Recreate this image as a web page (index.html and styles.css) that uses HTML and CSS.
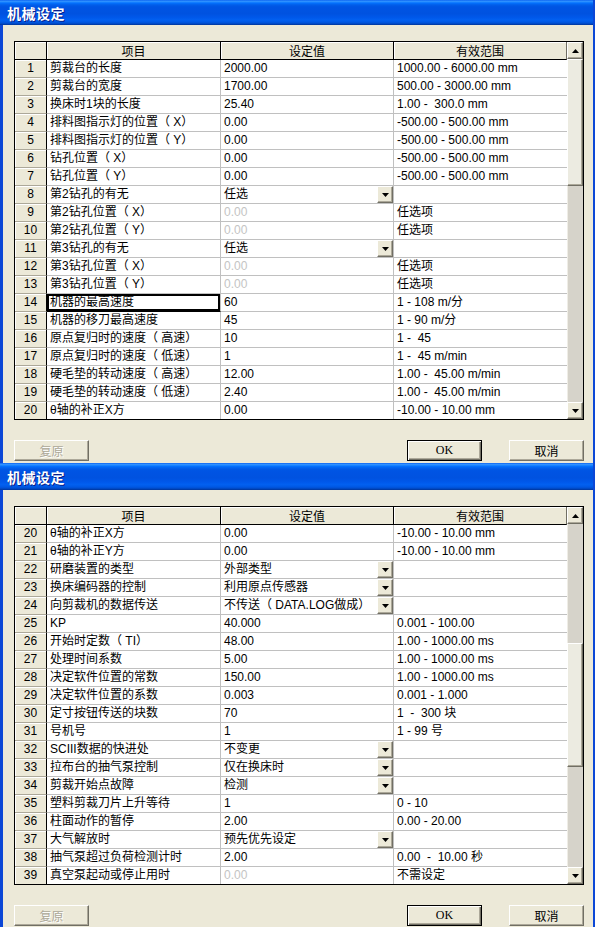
FILE: index.html
```html
<!DOCTYPE html>
<html lang="zh-CN">
<head>
<meta charset="utf-8">
<title>机械设定</title>
<link rel="stylesheet" href="styles.css">
</head>
<body>
<div class="page">

<section class="dialog first">
  <div class="titlebar"><span class="title">机械设定</span></div>
  <div class="body">
    <div class="grid">
      <div class="sheet">
        <div class="row head"><div class="num"></div><div>项目</div><div>设定值</div><div>有效范围</div></div>
        <div class="row"><div class="num">1</div><div>剪裁台的长度</div><div>2000.00</div><div>1000.00 - 6000.00 mm</div></div>
        <div class="row"><div class="num">2</div><div>剪裁台的宽度</div><div>1700.00</div><div>500.00 - 3000.00 mm</div></div>
        <div class="row"><div class="num">3</div><div>换床时1块的长度</div><div>25.40</div><div>1.00 -&nbsp; 300.0 mm</div></div>
        <div class="row"><div class="num">4</div><div>排料图指示灯的位置（ X）</div><div>0.00</div><div>-500.00 - 500.00 mm</div></div>
        <div class="row"><div class="num">5</div><div>排料图指示灯的位置（ Y）</div><div>0.00</div><div>-500.00 - 500.00 mm</div></div>
        <div class="row"><div class="num">6</div><div>钻孔位置（ X）</div><div>0.00</div><div>-500.00 - 500.00 mm</div></div>
        <div class="row"><div class="num">7</div><div>钻孔位置（ Y）</div><div>0.00</div><div>-500.00 - 500.00 mm</div></div>
        <div class="row"><div class="num">8</div><div>第2钻孔的有无</div><div class="combo"><span>任选</span><span class="drop"><svg width="7" height="4" viewBox="0 0 7 4"><path d="M0 0h7L3.5 4z"/></svg></span></div><div></div></div>
        <div class="row"><div class="num">9</div><div>第2钻孔位置（ X）</div><div class="off">0.00</div><div>任选项</div></div>
        <div class="row"><div class="num">10</div><div>第2钻孔位置（ Y）</div><div class="off">0.00</div><div>任选项</div></div>
        <div class="row"><div class="num">11</div><div>第3钻孔的有无</div><div class="combo"><span>任选</span><span class="drop"><svg width="7" height="4" viewBox="0 0 7 4"><path d="M0 0h7L3.5 4z"/></svg></span></div><div></div></div>
        <div class="row"><div class="num">12</div><div>第3钻孔位置（ X）</div><div class="off">0.00</div><div>任选项</div></div>
        <div class="row"><div class="num">13</div><div>第3钻孔位置（ Y）</div><div class="off">0.00</div><div>任选项</div></div>
        <div class="row"><div class="num">14</div><div class="focus">机器的最高速度</div><div>60</div><div>1 - 108 m/分</div></div>
        <div class="row"><div class="num">15</div><div>机器的移刀最高速度</div><div>45</div><div>1 - 90 m/分</div></div>
        <div class="row"><div class="num">16</div><div>原点复归时的速度（ 高速）</div><div>10</div><div>1 -&nbsp; 45</div></div>
        <div class="row"><div class="num">17</div><div>原点复归时的速度（ 低速）</div><div>1</div><div>1 -&nbsp; 45 m/min</div></div>
        <div class="row"><div class="num">18</div><div>硬毛垫的转动速度（ 高速）</div><div>12.00</div><div>1.00 -&nbsp; 45.00 m/min</div></div>
        <div class="row"><div class="num">19</div><div>硬毛垫的转动速度（ 低速）</div><div>2.40</div><div>1.00 -&nbsp; 45.00 m/min</div></div>
        <div class="row"><div class="num">20</div><div>θ轴的补正X方</div><div>0.00</div><div>-10.00 - 10.00 mm</div></div>
      </div>
      <div class="scrollbar">
        <div class="sb-btn"><svg width="7" height="4" viewBox="0 0 7 4"><path d="M0 4h7L3.5 0z"/></svg></div>
        <div class="sb-thumb thumb-a"></div>
        <div class="sb-track fill"></div>
        <div class="sb-btn"><svg width="7" height="4" viewBox="0 0 7 4"><path d="M0 0h7L3.5 4z"/></svg></div>
      </div>
    </div>
    <div class="buttons">
      <button class="btn off">复原</button>
      <button class="btn default">OK</button>
      <button class="btn">取消</button>
    </div>
  </div>
</section>

<section class="dialog second">
  <div class="titlebar"><span class="title">机械设定</span></div>
  <div class="body">
    <div class="grid">
      <div class="sheet">
        <div class="row head"><div class="num"></div><div>项目</div><div>设定值</div><div>有效范围</div></div>
        <div class="row"><div class="num">20</div><div>θ轴的补正X方</div><div>0.00</div><div>-10.00 - 10.00 mm</div></div>
        <div class="row"><div class="num">21</div><div>θ轴的补正Y方</div><div>0.00</div><div>-10.00 - 10.00 mm</div></div>
        <div class="row"><div class="num">22</div><div>研磨装置的类型</div><div class="combo"><span>外部类型</span><span class="drop"><svg width="7" height="4" viewBox="0 0 7 4"><path d="M0 0h7L3.5 4z"/></svg></span></div><div></div></div>
        <div class="row"><div class="num">23</div><div>换床编码器的控制</div><div class="combo"><span>利用原点传感器</span><span class="drop"><svg width="7" height="4" viewBox="0 0 7 4"><path d="M0 0h7L3.5 4z"/></svg></span></div><div></div></div>
        <div class="row"><div class="num">24</div><div>向剪裁机的数据传送</div><div class="combo"><span>不传送（ DATA.LOG做成）</span><span class="drop"><svg width="7" height="4" viewBox="0 0 7 4"><path d="M0 0h7L3.5 4z"/></svg></span></div><div></div></div>
        <div class="row"><div class="num">25</div><div>KP</div><div>40.000</div><div>0.001 - 100.00</div></div>
        <div class="row"><div class="num">26</div><div>开始时定数（ TI）</div><div>48.00</div><div>1.00 - 1000.00 ms</div></div>
        <div class="row"><div class="num">27</div><div>处理时间系数</div><div>5.00</div><div>1.00 - 1000.00 ms</div></div>
        <div class="row"><div class="num">28</div><div>决定软件位置的常数</div><div>150.00</div><div>1.00 - 1000.00 ms</div></div>
        <div class="row"><div class="num">29</div><div>决定软件位置的系数</div><div>0.003</div><div>0.001 - 1.000</div></div>
        <div class="row"><div class="num">30</div><div>定寸按钮传送的块数</div><div>70</div><div>1&nbsp; -&nbsp; 300 块</div></div>
        <div class="row"><div class="num">31</div><div>号机号</div><div>1</div><div>1 - 99 号</div></div>
        <div class="row"><div class="num">32</div><div>SCIII数据的快进处</div><div class="combo"><span>不变更</span><span class="drop"><svg width="7" height="4" viewBox="0 0 7 4"><path d="M0 0h7L3.5 4z"/></svg></span></div><div></div></div>
        <div class="row"><div class="num">33</div><div>拉布台的抽气泵控制</div><div class="combo"><span>仅在换床时</span><span class="drop"><svg width="7" height="4" viewBox="0 0 7 4"><path d="M0 0h7L3.5 4z"/></svg></span></div><div></div></div>
        <div class="row"><div class="num">34</div><div>剪裁开始点故障</div><div class="combo"><span>检测</span><span class="drop"><svg width="7" height="4" viewBox="0 0 7 4"><path d="M0 0h7L3.5 4z"/></svg></span></div><div></div></div>
        <div class="row"><div class="num">35</div><div>塑料剪裁刀片上升等待</div><div>1</div><div>0 - 10</div></div>
        <div class="row"><div class="num">36</div><div>柱面动作的暂停</div><div>2.00</div><div>0.00 - 20.00</div></div>
        <div class="row"><div class="num">37</div><div>大气解放时</div><div class="combo"><span>预先优先设定</span><span class="drop"><svg width="7" height="4" viewBox="0 0 7 4"><path d="M0 0h7L3.5 4z"/></svg></span></div><div></div></div>
        <div class="row"><div class="num">38</div><div>抽气泵超过负荷检测计时</div><div>2.00</div><div>0.00&nbsp; -&nbsp; 10.00 秒</div></div>
        <div class="row"><div class="num">39</div><div>真空泵起动或停止用时</div><div class="off">0.00</div><div>不需设定</div></div>
      </div>
      <div class="scrollbar">
        <div class="sb-btn"><svg width="7" height="4" viewBox="0 0 7 4"><path d="M0 4h7L3.5 0z"/></svg></div>
        <div class="sb-track track-b"></div>
        <div class="sb-thumb thumb-b"></div>
        <div class="sb-track fill"></div>
        <div class="sb-btn"><svg width="7" height="4" viewBox="0 0 7 4"><path d="M0 0h7L3.5 4z"/></svg></div>
      </div>
    </div>
    <div class="buttons">
      <button class="btn off">复原</button>
      <button class="btn default">OK</button>
      <button class="btn">取消</button>
    </div>
  </div>
</section>

</div>
</body>
</html>
```

FILE: styles.css
```css
html, body {
  margin: 0;
  padding: 0;
  background: #ECE9D8;
}

body {
  font-family: "Liberation Sans", "Noto Sans CJK SC", sans-serif;
  font-size: 12px;
  color: #000;
  text-spacing-trim: space-all;
}

.page {
  width: 595px;
  height: 927px;
  overflow: hidden;
}

.titlebar {
  height: 25px;
  display: flex;
  align-items: center;
  padding-left: 7px;
  background: linear-gradient(180deg,
    #0058EE 0%, #3593FF 4%, #288EFF 7%, #127DFF 10%, #036FFC 13%,
    #0262EE 18%, #0057E5 24%, #0054E3 30%, #0052E0 55%, #0058EA 70%,
    #0260F0 80%, #0058E4 88%, #004FD2 93%, #0040B0 97%, #00329A 100%);
  border-right: 2px solid #0B47D6;
}

.second .titlebar {
  height: 27px;
}

.title {
  color: #fff;
  font-family: "Noto Sans CJK SC", sans-serif;
  font-weight: bold;
  font-size: 14px;
  letter-spacing: 0.5px;
  text-shadow: 1px 1px 0 #0A1F8A;
}

.body {
  background: #ECE9D8;
  border-left: 3px solid #0B47D6;
  border-right: 2px solid #0B47D6;
  padding: 16px 9px 2px 11px;
}

.grid {
  display: flex;
  width: 570px;
  height: 379px;
  box-sizing: border-box;
  border: 1px solid #000;
  background: #fff;
}

.sheet {
  display: flex;
  flex-direction: column;
  width: 552px;
}

.row {
  display: grid;
  grid-template-columns: 32px 174px 173px 173px;
  height: 18px;
}

.row > div {
  box-sizing: border-box;
  border-right: 1px solid #C0C0C0;
  border-bottom: 1px solid #C0C0C0;
  line-height: 17px;
  padding-left: 3px;
  white-space: pre;
  overflow: hidden;
}

.row > div:last-child {
  border-right: none;
}

.row:last-child {
  height: 17px;
}

.row:last-child > div {
  border-bottom: none;
}

.row > .num {
  background: #ECE9D8;
  text-align: center;
  padding-left: 0;
  border-right: 1px solid #000;
  border-bottom: 1px solid #ACA899;
  box-shadow: inset 1px 1px 0 #fff;
}

.row:last-child > .num {
  border-bottom: none;
}

.head > div {
  background: #ECE9D8;
  text-align: center;
  padding-left: 0;
  border-right: 1px solid #000;
  border-bottom: 1px solid #000;
  box-shadow: inset 1px 1px 0 #fff;
  font-family: "Noto Sans CJK SC", sans-serif;
}

.head > div:last-child {
  border-right: 1px solid #716F64;
}

.head > .num {
  border-bottom: 1px solid #000;
}

.row > .off {
  color: #C4C4C4;
}

.row > .focus {
  box-shadow: inset 0 0 0 2px #000;
  border-bottom-color: #000;
}

.row > .combo {
  display: flex;
  justify-content: space-between;
  padding-right: 0;
}

.drop {
  width: 16px;
  height: 17px;
  box-sizing: border-box;
  display: flex;
  align-items: center;
  justify-content: center;
  background: #ECE9D8;
  border: 1px solid;
  border-color: #fff #716F64 #716F64 #fff;
  box-shadow: inset -1px -1px 0 #ACA899;
}

.drop svg,
.sb-btn svg {
  display: block;
  fill: #000;
}

.scrollbar {
  width: 16px;
  display: flex;
  flex-direction: column;
  background: #D6D3CA;
}

.sb-btn {
  height: 17px;
  flex: none;
  box-sizing: border-box;
  display: flex;
  align-items: center;
  justify-content: center;
  background: #ECE9D8;
  border: 1px solid;
  border-color: #fff #716F64 #716F64 #fff;
  box-shadow: inset -1px -1px 0 #ACA899;
}

.sb-thumb {
  flex: none;
  box-sizing: border-box;
  background: #ECEBE1;
  border: 1px solid;
  border-color: #fff #716F64 #716F64 #fff;
  box-shadow: inset -1px -1px 0 #ACA899;
}

.sb-track {
  background: #D6D3CA;
  box-shadow: inset 1px 0 0 #EFEDE6;
}

.thumb-a {
  height: 127px;
}

.track-b {
  flex: none;
  height: 119px;
}

.thumb-b {
  height: 124px;
}

.fill {
  flex: 1;
}

.buttons {
  display: flex;
  align-items: flex-start;
  margin-top: 20px;
  height: 21px;
}

.btn {
  width: 75px;
  height: 21px;
  box-sizing: border-box;
  padding: 0;
  margin: 0;
  background: #ECE9D8;
  border: 1px solid;
  border-color: #fff #716F64 #716F64 #fff;
  box-shadow: inset -1px -1px 0 #ACA899;
  font-family: "Noto Sans CJK SC", sans-serif;
  font-size: 12px;
  line-height: 17px;
  color: #000;
}

.btn.off {
  color: #ACA899;
  text-shadow: 1px 1px 0 #fff;
}

.btn.default {
  margin-left: auto;
  margin-right: 27px;
  border: 1px solid #000;
  box-shadow: inset 1px 1px 0 #fff, inset -1px -1px 0 #716F64, inset -2px -2px 0 #ACA899;
  font-family: "Liberation Serif", serif;
  font-size: 12px;
}
```
